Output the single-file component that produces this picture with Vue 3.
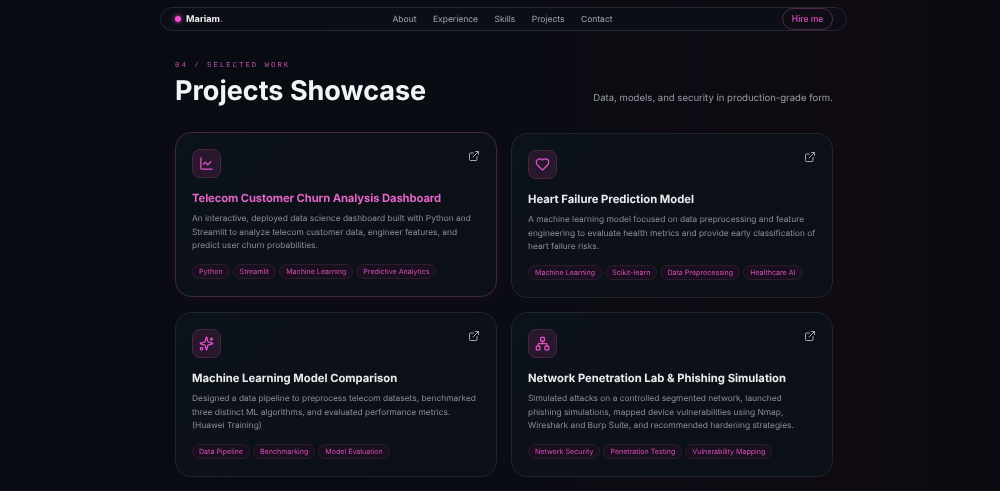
<script setup>
const links = ["About", "Experience", "Skills", "Projects", "Contact"];

const projects = [
  {
    title: "Telecom Customer Churn Analysis Dashboard",
    text: "An interactive, deployed data science dashboard built with Python and Streamlit to analyze telecom customer data, engineer features, and predict user churn probabilities.",
    tags: ["Python", "Streamlit", "Machine Learning", "Predictive Analytics"],
    active: true,
    icon: ["M3 3v16a2 2 0 0 0 2 2h16", "m19 9-5 5-4-4-3 3"],
  },
  {
    title: "Heart Failure Prediction Model",
    text: "A machine learning model focused on data preprocessing and feature engineering to evaluate health metrics and provide early classification of heart failure risks.",
    tags: ["Machine Learning", "Scikit-learn", "Data Preprocessing", "Healthcare AI"],
    icon: ["M19 14c1.49-1.46 3-3.21 3-5.5A5.5 5.5 0 0 0 16.5 3c-1.76 0-3 .5-4.5 2-1.5-1.5-2.74-2-4.5-2A5.5 5.5 0 0 0 2 8.5c0 2.3 1.5 4.05 3 5.5l7 7Z"],
  },
  {
    title: "Machine Learning Model Comparison",
    text: "Designed a data pipeline to preprocess telecom datasets, benchmarked three distinct ML algorithms, and evaluated performance metrics. (Huawei Training)",
    tags: ["Data Pipeline", "Benchmarking", "Model Evaluation"],
    icon: [
      "M9.937 15.5A2 2 0 0 0 8.5 14.063l-6.135-1.582a.5.5 0 0 1 0-.962L8.5 9.936A2 2 0 0 0 9.937 8.5l1.582-6.135a.5.5 0 0 1 .963 0L14.063 8.5A2 2 0 0 0 15.5 9.937l6.135 1.581a.5.5 0 0 1 0 .964L15.5 14.063a2 2 0 0 0-1.437 1.437l-1.582 6.135a.5.5 0 0 1-.963 0z",
      "M20 3v4",
      "M22 5h-4",
      "M6 20a2 2 0 1 1-4 0 2 2 0 0 1 4 0Z",
    ],
  },
  {
    title: "Network Penetration Lab & Phishing Simulation",
    text: "Simulated attacks on a controlled segmented network, launched phishing simulations, mapped device vulnerabilities using Nmap, Wireshark and Burp Suite, and recommended hardening strategies.",
    tags: ["Network Security", "Penetration Testing", "Vulnerability Mapping"],
    icon: [
      "M17 16h4a1 1 0 0 1 1 1v4a1 1 0 0 1-1 1h-4a1 1 0 0 1-1-1v-4a1 1 0 0 1 1-1Z",
      "M3 16h4a1 1 0 0 1 1 1v4a1 1 0 0 1-1 1H3a1 1 0 0 1-1-1v-4a1 1 0 0 1 1-1Z",
      "M10 2h4a1 1 0 0 1 1 1v4a1 1 0 0 1-1 1h-4a1 1 0 0 1-1-1V3a1 1 0 0 1 1-1Z",
      "M5 16v-3a1 1 0 0 1 1-1h12a1 1 0 0 1 1 1v3",
      "M12 12V8",
    ],
  },
];

const externalIcon = [
  "M15 3h6v6",
  "M10 14 21 3",
  "M18 13v6a2 2 0 0 1-2 2H5a2 2 0 0 1-2-2V8a2 2 0 0 1 2-2h6",
];
</script>

<template>
  <div class="page">
    <nav class="topbar">
      <a class="logo"><span class="dot"></span><span>Mariam<span class="period">.</span></span></a>
      <ul class="links">
        <li v-for="link in links" :key="link">{{ link }}</li>
      </ul>
      <button class="hire">Hire me</button>
    </nav>

    <main class="content">
      <header class="head">
        <div>
          <p class="eyebrow">04 / SELECTED WORK</p>
          <h1>Projects Showcase</h1>
        </div>
        <p class="lead">Data, models, and security in production-grade form.</p>
      </header>

      <section class="grid">
        <article
          v-for="project in projects"
          :key="project.title"
          class="card"
          :class="{ active: project.active }"
        >
          <div class="card-top">
            <span class="icon-box">
              <svg viewBox="0 0 24 24" class="icon">
                <path v-for="d in project.icon" :key="d" :d="d" />
              </svg>
            </span>
            <svg viewBox="0 0 24 24" class="external">
              <path v-for="d in externalIcon" :key="d" :d="d" />
            </svg>
          </div>
          <h2>{{ project.title }}</h2>
          <p class="text">{{ project.text }}</p>
          <ul class="tags">
            <li v-for="tag in project.tags" :key="tag">{{ tag }}</li>
          </ul>
        </article>
      </section>
    </main>
  </div>
</template>

<style>
html,
body {
  margin: 0;
  background: #090b11;
  overflow: hidden;
}
</style>

<style scoped>
.page {
  box-sizing: border-box;
  height: 491px;
  padding: 7px 0 0 160px;
  font-family: Inter, "Liberation Sans", sans-serif;
  text-rendering: geometricPrecision;
  background: linear-gradient(90deg, #080b12 0%, #0a0c13 50%, #100b13 85%, #0b0a10 100%);
  color: #f1f2f4;
}

.topbar {
  box-sizing: border-box;
  width: 687px;
  height: 24px;
  display: flex;
  align-items: center;
  justify-content: space-between;
  padding: 0 13px 0 14px;
  border: 1px solid #24272e;
  border-radius: 12px;
  background: #0b0e14;
  will-change: transform;
}

.logo {
  display: flex;
  align-items: center;
  gap: 5px;
  font-size: 9.2px;
  font-weight: 700;
  color: #eceef1;
}

.dot {
  width: 6px;
  height: 6px;
  border-radius: 50%;
  background: #f14fd6;
  box-shadow: 0 0 5px #e845c8;
}

.period {
  color: #c94cb0;
}

.links {
  display: flex;
  gap: 16.5px;
  margin: 1px 0 0;
  padding: 0;
  list-style: none;
  font-size: 8.5px;
  color: #a3a6ac;
}

.hire {
  width: 51px;
  height: 22px;
  padding: 0;
  border: 1px solid #4f2a4c;
  border-radius: 11px;
  background: #0e0d14;
  font: 500 8.5px Inter, "Liberation Sans", sans-serif;
  color: #dc50c4;
}

.content {
  width: 658px;
  margin: 30px 0 0 15px;
  will-change: transform;
}

.head {
  display: flex;
  align-items: flex-end;
  justify-content: space-between;
}

.eyebrow {
  margin: 0 0 3px;
  font-family: "Liberation Mono", monospace;
  font-size: 7.5px;
  letter-spacing: 1.9px;
  line-height: 10px;
  color: #c04fa6;
}

h1 {
  margin: 0;
  font-size: 27px;
  font-weight: 700;
  line-height: 34px;
  color: #f3f4f6;
}

.lead {
  margin: 0 0 2px;
  font-size: 9.56px;
  line-height: 14px;
  color: #989ba2;
}

.grid {
  display: grid;
  grid-template-columns: 322px 322px;
  gap: 14.5px 14px;
  margin-top: 25px;
}

.card {
  box-sizing: border-box;
  height: 164.5px;
  padding: 16px;
  border: 1px solid #21252b;
  border-radius: 16px;
  background: linear-gradient(135deg, #0c1219 0%, #0b1016 100%);
}

.card.active {
  transform: translateY(-1px);
  border-color: #3b2a3a;
  box-shadow: 0 3px 14px rgba(160, 40, 130, 0.1);
}

.card-top {
  display: flex;
  align-items: flex-start;
  justify-content: space-between;
}

.icon-box {
  box-sizing: border-box;
  width: 29px;
  height: 29px;
  display: flex;
  align-items: center;
  justify-content: center;
  border: 1px solid #43293f;
  border-radius: 8px;
  background: #29172d;
}

.icon {
  width: 15px;
  height: 15px;
  fill: none;
  stroke: #e454c9;
  stroke-width: 2;
  stroke-linecap: round;
  stroke-linejoin: round;
}

.external {
  width: 12px;
  height: 12px;
  margin: 1px 0 0;
  fill: none;
  stroke: #a3a6ac;
  stroke-width: 2;
  stroke-linecap: round;
  stroke-linejoin: round;
}

h2 {
  margin: 11px 0 0;
  font-size: 11.25px;
  font-weight: 700;
  line-height: 18px;
  color: #e9ebee;
}

.active h2 {
  letter-spacing: -0.1px;
  color: #e564c9;
}

.text {
  margin: 6px 0 0;
  font-size: 8.4px;
  line-height: 13.5px;
  height: 41px;
  color: #8c8f96;
}

.tags {
  display: flex;
  gap: 3px;
  margin: 10px 0 0;
  padding: 0;
  list-style: none;
}

.tags li {
  box-sizing: border-box;
  height: 15px;
  padding: 0 6px;
  border: 1px solid #2a1e2d;
  border-radius: 8px;
  background: #1a0f1e;
  font-size: 7.1px;
  line-height: 13px;
  white-space: nowrap;
  color: #d04fb4;
}
</style>
